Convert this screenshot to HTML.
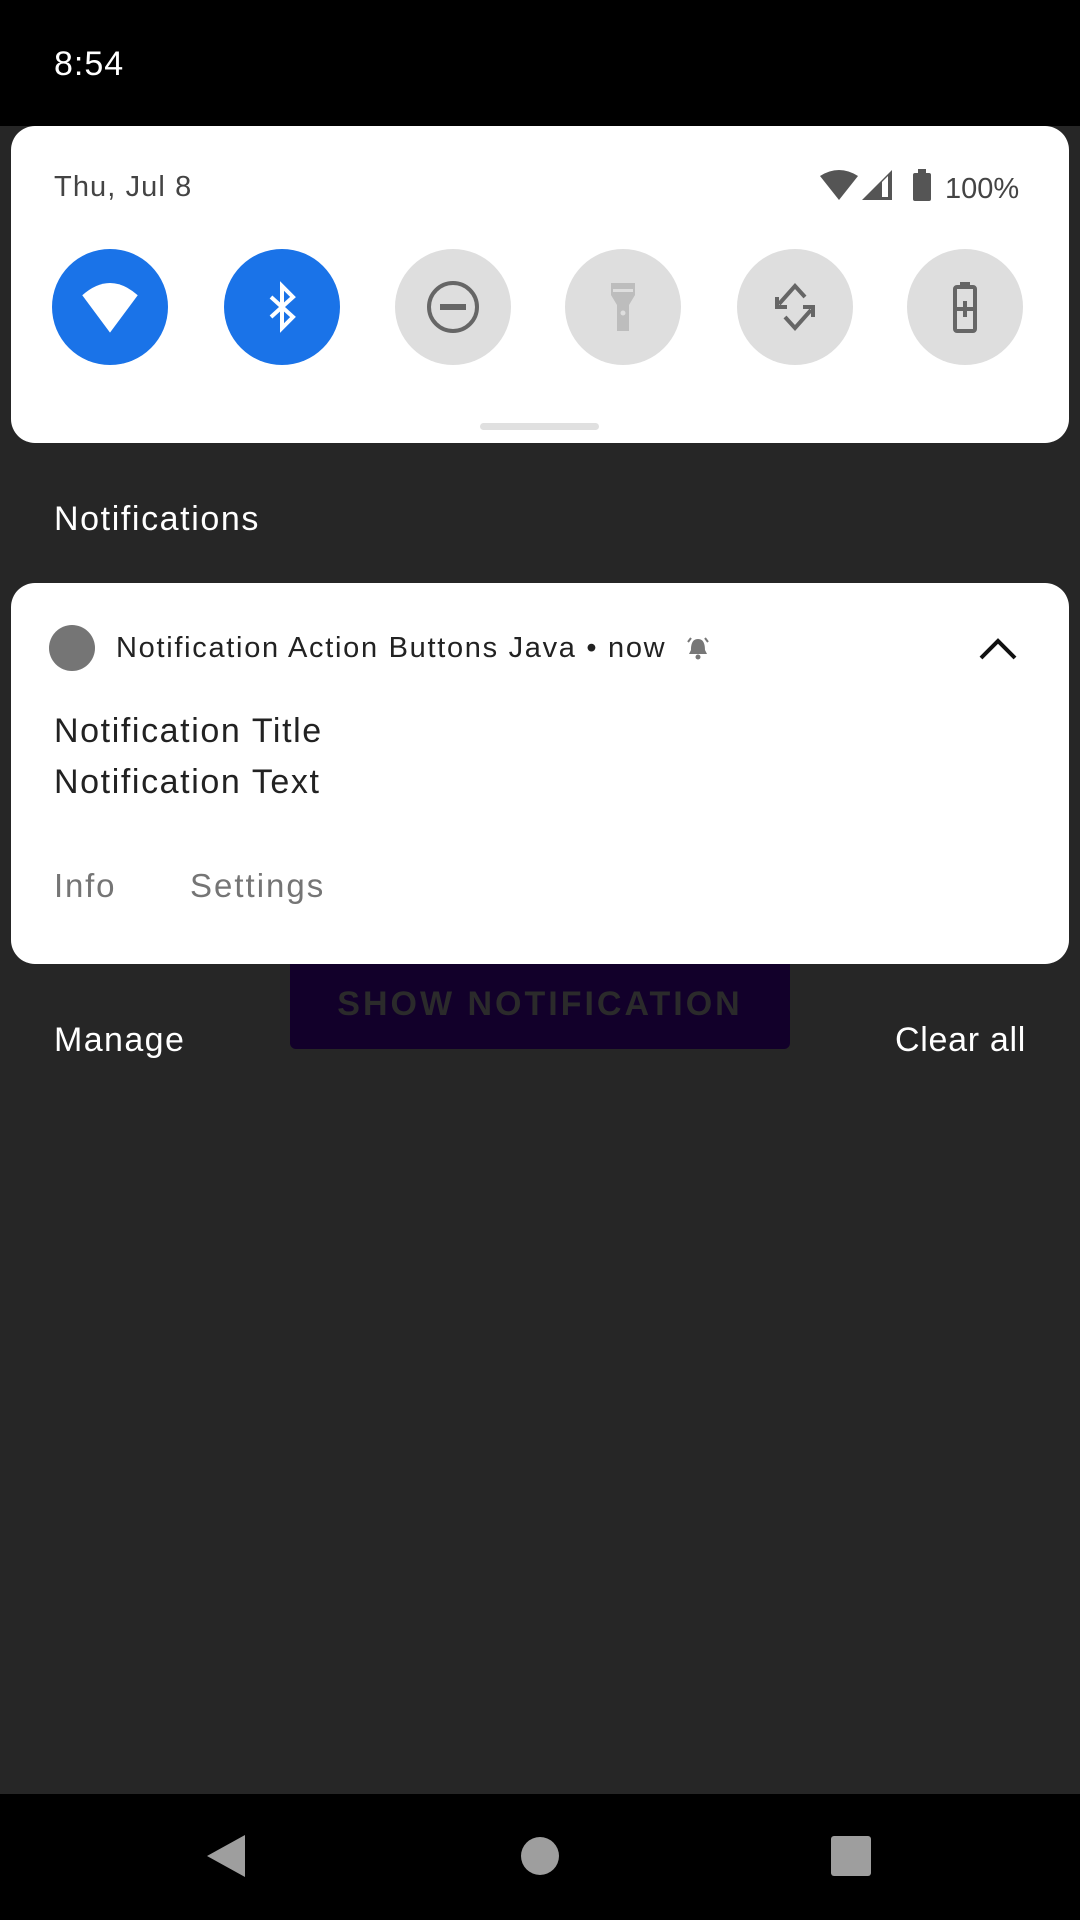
<!DOCTYPE html>
<html><head><meta charset="utf-8"><style>
*{margin:0;padding:0;box-sizing:border-box}
body{width:1080px;height:1920px;background:#262626;font-family:"Liberation Sans",sans-serif;position:relative;overflow:hidden}
.abs{position:absolute}
.t{white-space:nowrap;line-height:1}
.tile{position:absolute;width:116px;height:116px;border-radius:50%;top:249px;display:flex;align-items:center;justify-content:center}
</style></head><body>
<div class="abs" style="left:0;top:0;width:1080px;height:126px;background:#000"></div>
<div class="abs t" style="left:54px;top:47px;font-size:34px;color:#fff;letter-spacing:1px">8:54</div>

<div class="abs" style="left:11px;top:126px;width:1058px;height:317px;background:#fff;border-radius:24px"></div>
<div class="abs t" style="left:54px;top:173px;font-size:29px;color:#444;letter-spacing:1.1px">Thu, Jul 8</div>
<svg class="abs" style="left:818px;top:168px" width="210" height="36" viewBox="0 0 210 36">
<path d="M2 8 Q21 -4 40 8 L21 32 Z" fill="#555"/>
<path d="M44 32 L74 2 L74 32 Z" fill="#555"/><path d="M64 14 L70 8 L70 29 L64 29Z" fill="#fff"/>
<rect x="95" y="5" width="18" height="28" rx="2" fill="#555"/><rect x="100" y="1" width="8" height="5" fill="#555"/>
<text x="127" y="30" font-family="Liberation Sans" font-size="29" fill="#444">100%</text>
</svg>
<div class="tile" style="left:52px;background:#1a73e8"><svg width="64" height="64" viewBox="0 0 60 60"><path d="M4 19 Q30 -4 56 19 L30 54 Z" fill="#fff"/></svg></div>
<div class="tile" style="left:224px;background:#1a73e8"><svg width="60" height="60" viewBox="0 0 60 60"><path d="M19 20 L41 40 L30 51 L30 9 L41 20 L19 40" stroke="#fff" stroke-width="4" fill="none"/></svg></div>
<div class="tile" style="left:395px;background:#dedede"><svg width="60" height="60" viewBox="0 0 60 60"><circle cx="30" cy="30" r="24" stroke="#666" stroke-width="4" fill="none"/><rect x="17" y="27" width="26" height="6" fill="#666"/></svg></div>
<div class="tile" style="left:565px;background:#dedede"><svg width="60" height="60" viewBox="0 0 60 60"><path d="M18 6 H42 V18 L36 28 V54 H24 V28 L18 18 Z" fill="#bdbdbd"/><rect x="20" y="12" width="20" height="3" fill="#dedede"/><circle cx="30" cy="36" r="2.5" fill="#dedede"/></svg></div>
<div class="tile" style="left:737px;background:#dedede"><svg width="60" height="60" viewBox="0 0 60 60"><path d="M14 27 L30 9 L40 20 M46 33 L30 51 L20 40" stroke="#666" stroke-width="4" fill="none"/><path d="M12 20 V30 H22" stroke="#666" stroke-width="4" fill="none"/><path d="M48 40 V30 H38" stroke="#666" stroke-width="4" fill="none"/></svg></div>
<div class="tile" style="left:907px;background:#dedede"><svg width="60" height="60" viewBox="0 0 60 60"><rect x="20" y="10" width="20" height="44" rx="2" stroke="#666" stroke-width="4" fill="none"/><rect x="25" y="5" width="10" height="6" fill="#666"/><path d="M30 24 V40 M22 32 H38" stroke="#666" stroke-width="4"/></svg></div>
<div class="abs" style="left:480px;top:423px;width:119px;height:7px;border-radius:4px;background:#e0e0e0"></div>

<div class="abs t" style="left:54px;top:502px;font-size:34px;color:#fff;letter-spacing:1.6px">Notifications</div>

<div class="abs" style="left:290px;top:964px;width:500px;height:85px;background:#12002a;border-radius:0 0 6px 6px"></div>
<div class="abs t" style="left:290px;top:987px;width:500px;text-align:center;font-size:34px;font-weight:bold;letter-spacing:3px;color:#2b2b2b">SHOW NOTIFICATION</div>

<div class="abs" style="left:11px;top:583px;width:1058px;height:381px;background:#fff;border-radius:24px"></div>
<div class="abs" style="left:49px;top:625px;width:46px;height:46px;border-radius:50%;background:#757575"></div>
<div class="abs t" style="left:116px;top:634px;font-size:29px;color:#222;letter-spacing:1.7px">Notification Action Buttons Java • now</div>
<svg class="abs" style="left:686px;top:636px" width="24" height="26" viewBox="0 0 24 26"><path d="M12 3 C6 3 5 9 5 14 L3 18 H21 L19 14 C19 9 18 3 12 3Z" fill="#777"/><circle cx="12" cy="21" r="2.5" fill="#777"/><path d="M2 6 L5 2 M22 6 L19 2" stroke="#777" stroke-width="2"/></svg>
<svg class="abs" style="left:978px;top:636px" width="40" height="26" viewBox="0 0 40 26"><path d="M3 22 L20 5 L37 22" stroke="#111" stroke-width="4" fill="none"/></svg>
<div class="abs t" style="left:54px;top:714px;font-size:34px;color:#222;letter-spacing:1.6px">Notification Title</div>
<div class="abs t" style="left:54px;top:765px;font-size:34px;color:#222;letter-spacing:1.6px">Notification Text</div>
<div class="abs t" style="left:54px;top:869px;font-size:33px;color:#757575;letter-spacing:1.8px">Info</div>
<div class="abs t" style="left:190px;top:869px;font-size:33px;color:#757575;letter-spacing:2px">Settings</div>

<div class="abs t" style="left:54px;top:1023px;font-size:34px;color:#fff;letter-spacing:1.4px">Manage</div>
<div class="abs t" style="right:54px;top:1023px;font-size:34px;color:#fff;letter-spacing:0.7px">Clear all</div>

<div class="abs" style="left:0;top:1794px;width:1080px;height:126px;background:#000"></div>
<svg class="abs" style="left:0;top:1794px" width="1080" height="126"><path d="M245 41 V83 L207 62 Z" fill="#9e9e9e"/><circle cx="540" cy="62" r="19" fill="#9e9e9e"/><rect x="831" y="42" width="40" height="40" rx="3" fill="#9e9e9e"/></svg>
</body></html>
